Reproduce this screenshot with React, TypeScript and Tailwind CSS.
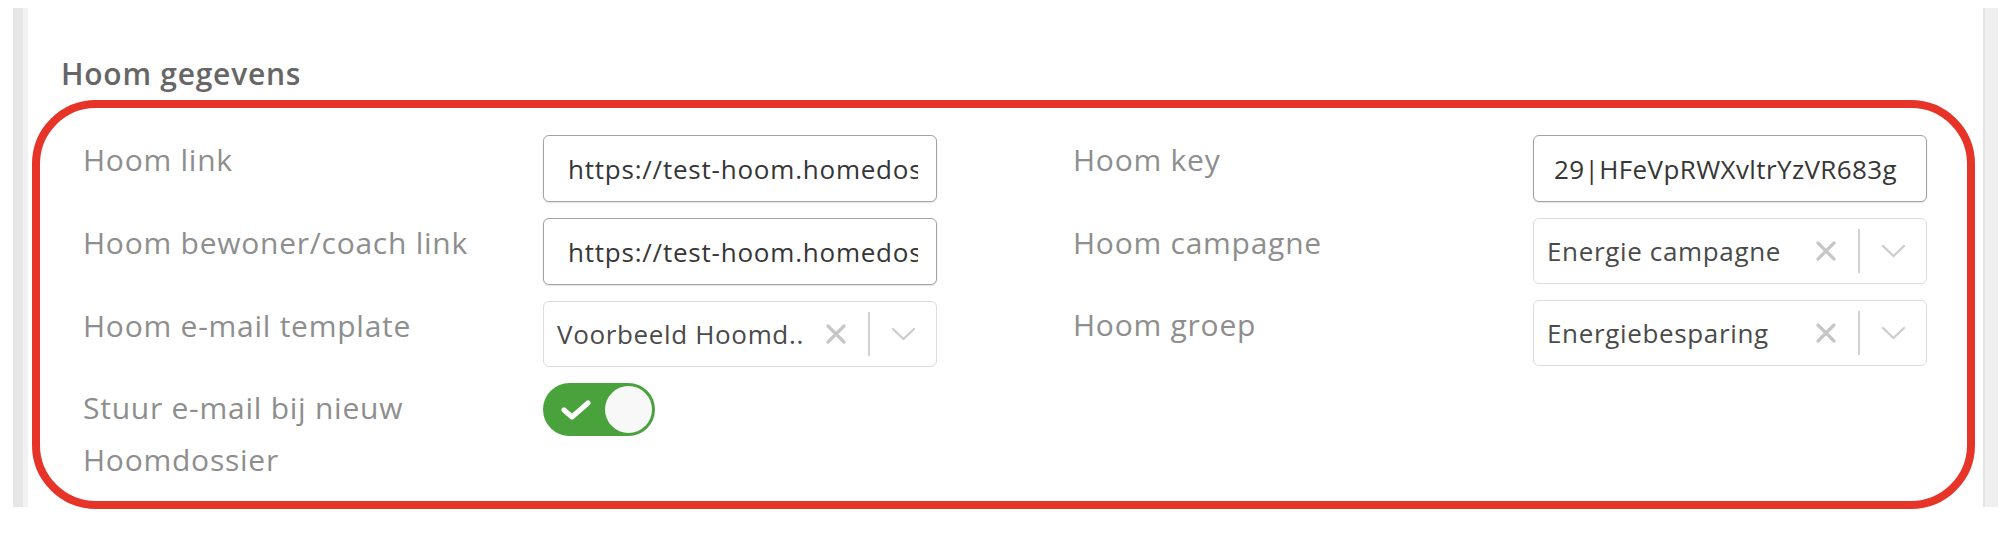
import React, { useState } from 'react';

// Hoom settings panel: two columns of label + control rows

function XIcon() {
  return (
    <svg width="22" height="22" viewBox="0 0 22 22" className="shrink-0">
      <path d="M3 3 L19 19 M19 3 L3 19" stroke="#c6c6c6" strokeWidth="3.2" strokeLinecap="round" />
    </svg>
  );
}

function Chevron() {
  return (
    <svg width="25" height="14" viewBox="0 0 25 14" className="shrink-0">
      <path d="M2 2 L12.5 12 L23 2" fill="none" stroke="#cdcdcd" strokeWidth="2.4" strokeLinecap="round" strokeLinejoin="round" />
    </svg>
  );
}

interface FieldRowProps {
  label: React.ReactNode;
  children: React.ReactNode;
}

function FieldRow({ label, children }: FieldRowProps) {
  return (
    <div className="flex items-start">
      <div className="w-[460px] shrink-0 -mt-[1px] text-[30px] leading-[52px] tracking-[0.025em] text-[#8e8e8e]">{label}</div>
      <div className="w-[394px] shrink-0">{children}</div>
    </div>
  );
}

function TextInput({ value, tight = false }: { value: string; tight?: boolean }) {
  return (
    <input
      readOnly
      value={value}
      className={clsxLite(
        'w-full h-[67px] pr-[18px] rounded-[6px] border-[1.5px] border-[#a3a3a3] bg-white text-[26px] text-[#363636] shadow-[0_1px_2px_rgba(0,0,0,0.12)] outline-none',
        tight ? 'pl-[20px] tracking-[0.015em]' : 'pl-[24px] tracking-[0.03em]'
      )}
    />
  );
}

function clsxLite(...parts: string[]) {
  return parts.join(' ');
}

function SelectBox({ value }: { value: string }) {
  return (
    <div className="flex items-center w-full h-[66px] pl-[13px] pr-[20px] rounded-[6px] border-[1.5px] border-[#dcdcdc] bg-white">
      <span className="flex-1 whitespace-nowrap overflow-hidden text-[26px] tracking-[0.025em] text-[#4a4a4a]">{value}</span>
      <XIcon />
      <div className="mx-[21px] w-[2px] h-[44px] bg-[#d2d2d2]" />
      <Chevron />
    </div>
  );
}

function Toggle() {
  const [on, setOn] = useState(true);
  return (
    <button
      onClick={() => setOn(!on)}
      className={`flex items-center justify-between w-[112px] h-[53px] rounded-full px-[3px] ${on ? 'bg-[#4aa23d]' : 'bg-[#cccccc]'}`}
    >
      <svg width="30" height="20" viewBox="0 0 30 20" className="ml-[15px]">
        <path d="M3 10 L11 17 L27 3" fill="none" stroke="#ffffff" strokeWidth="5" strokeLinecap="round" strokeLinejoin="round" />
      </svg>
      <span className="w-[47px] h-[47px] rounded-full bg-[#f8f8f8]" />
    </button>
  );
}

export default function App() {
  return (
    <div className="h-[536px] w-full bg-white pt-2 font-['Open_Sans',sans-serif]">
      <div className="flex h-[499px]">
        <div className="ml-[13px] w-[15px] shrink-0 bg-[#e6e6e6] border-r-[5px] border-[#f2f2f2]" />

        <div className="flex-1">
          <h2 className="ml-[33px] mt-[46px] text-[30px] leading-[40px] font-semibold tracking-[0.025em] text-[#666666]">
            Hoom gegevens
          </h2>

          {/* highlighted block */}
          <div className="ml-1 mr-2 mt-[6px] h-[409px] rounded-[64px] border-8 border-[#e63428] pl-[43px] pr-[40px] pt-[27px]">
            <div className="grid grid-cols-2 gap-x-[136px]">
              <div className="flex flex-col gap-[16px]">
                <FieldRow label="Hoom link">
                  <TextInput value="https://test-hoom.homedossier.nl/api/v1" />
                </FieldRow>
                <FieldRow label="Hoom bewoner/coach link">
                  <TextInput value="https://test-hoom.homedossier.nl/" />
                </FieldRow>
                <FieldRow label="Hoom e-mail template">
                  <SelectBox value="Voorbeeld Hoomd.." />
                </FieldRow>
                <FieldRow label={<>Stuur e-mail bij nieuw<br />Hoomdossier</>}>
                  <Toggle />
                </FieldRow>
              </div>

              <div className="flex flex-col gap-[16px]">
                <FieldRow label="Hoom key">
                  <TextInput value="29|HFeVpRWXvltrYzVR683g" tight />
                </FieldRow>
                <FieldRow label="Hoom campagne">
                  <SelectBox value="Energie campagne" />
                </FieldRow>
                <FieldRow label="Hoom groep">
                  <SelectBox value="Energiebesparing" />
                </FieldRow>
              </div>
            </div>
          </div>
        </div>

        <div className="mr-1 w-[15px] shrink-0 bg-[#efefef] border-l-[2px] border-[#e4e4e4]" />
      </div>
    </div>
  );
}
